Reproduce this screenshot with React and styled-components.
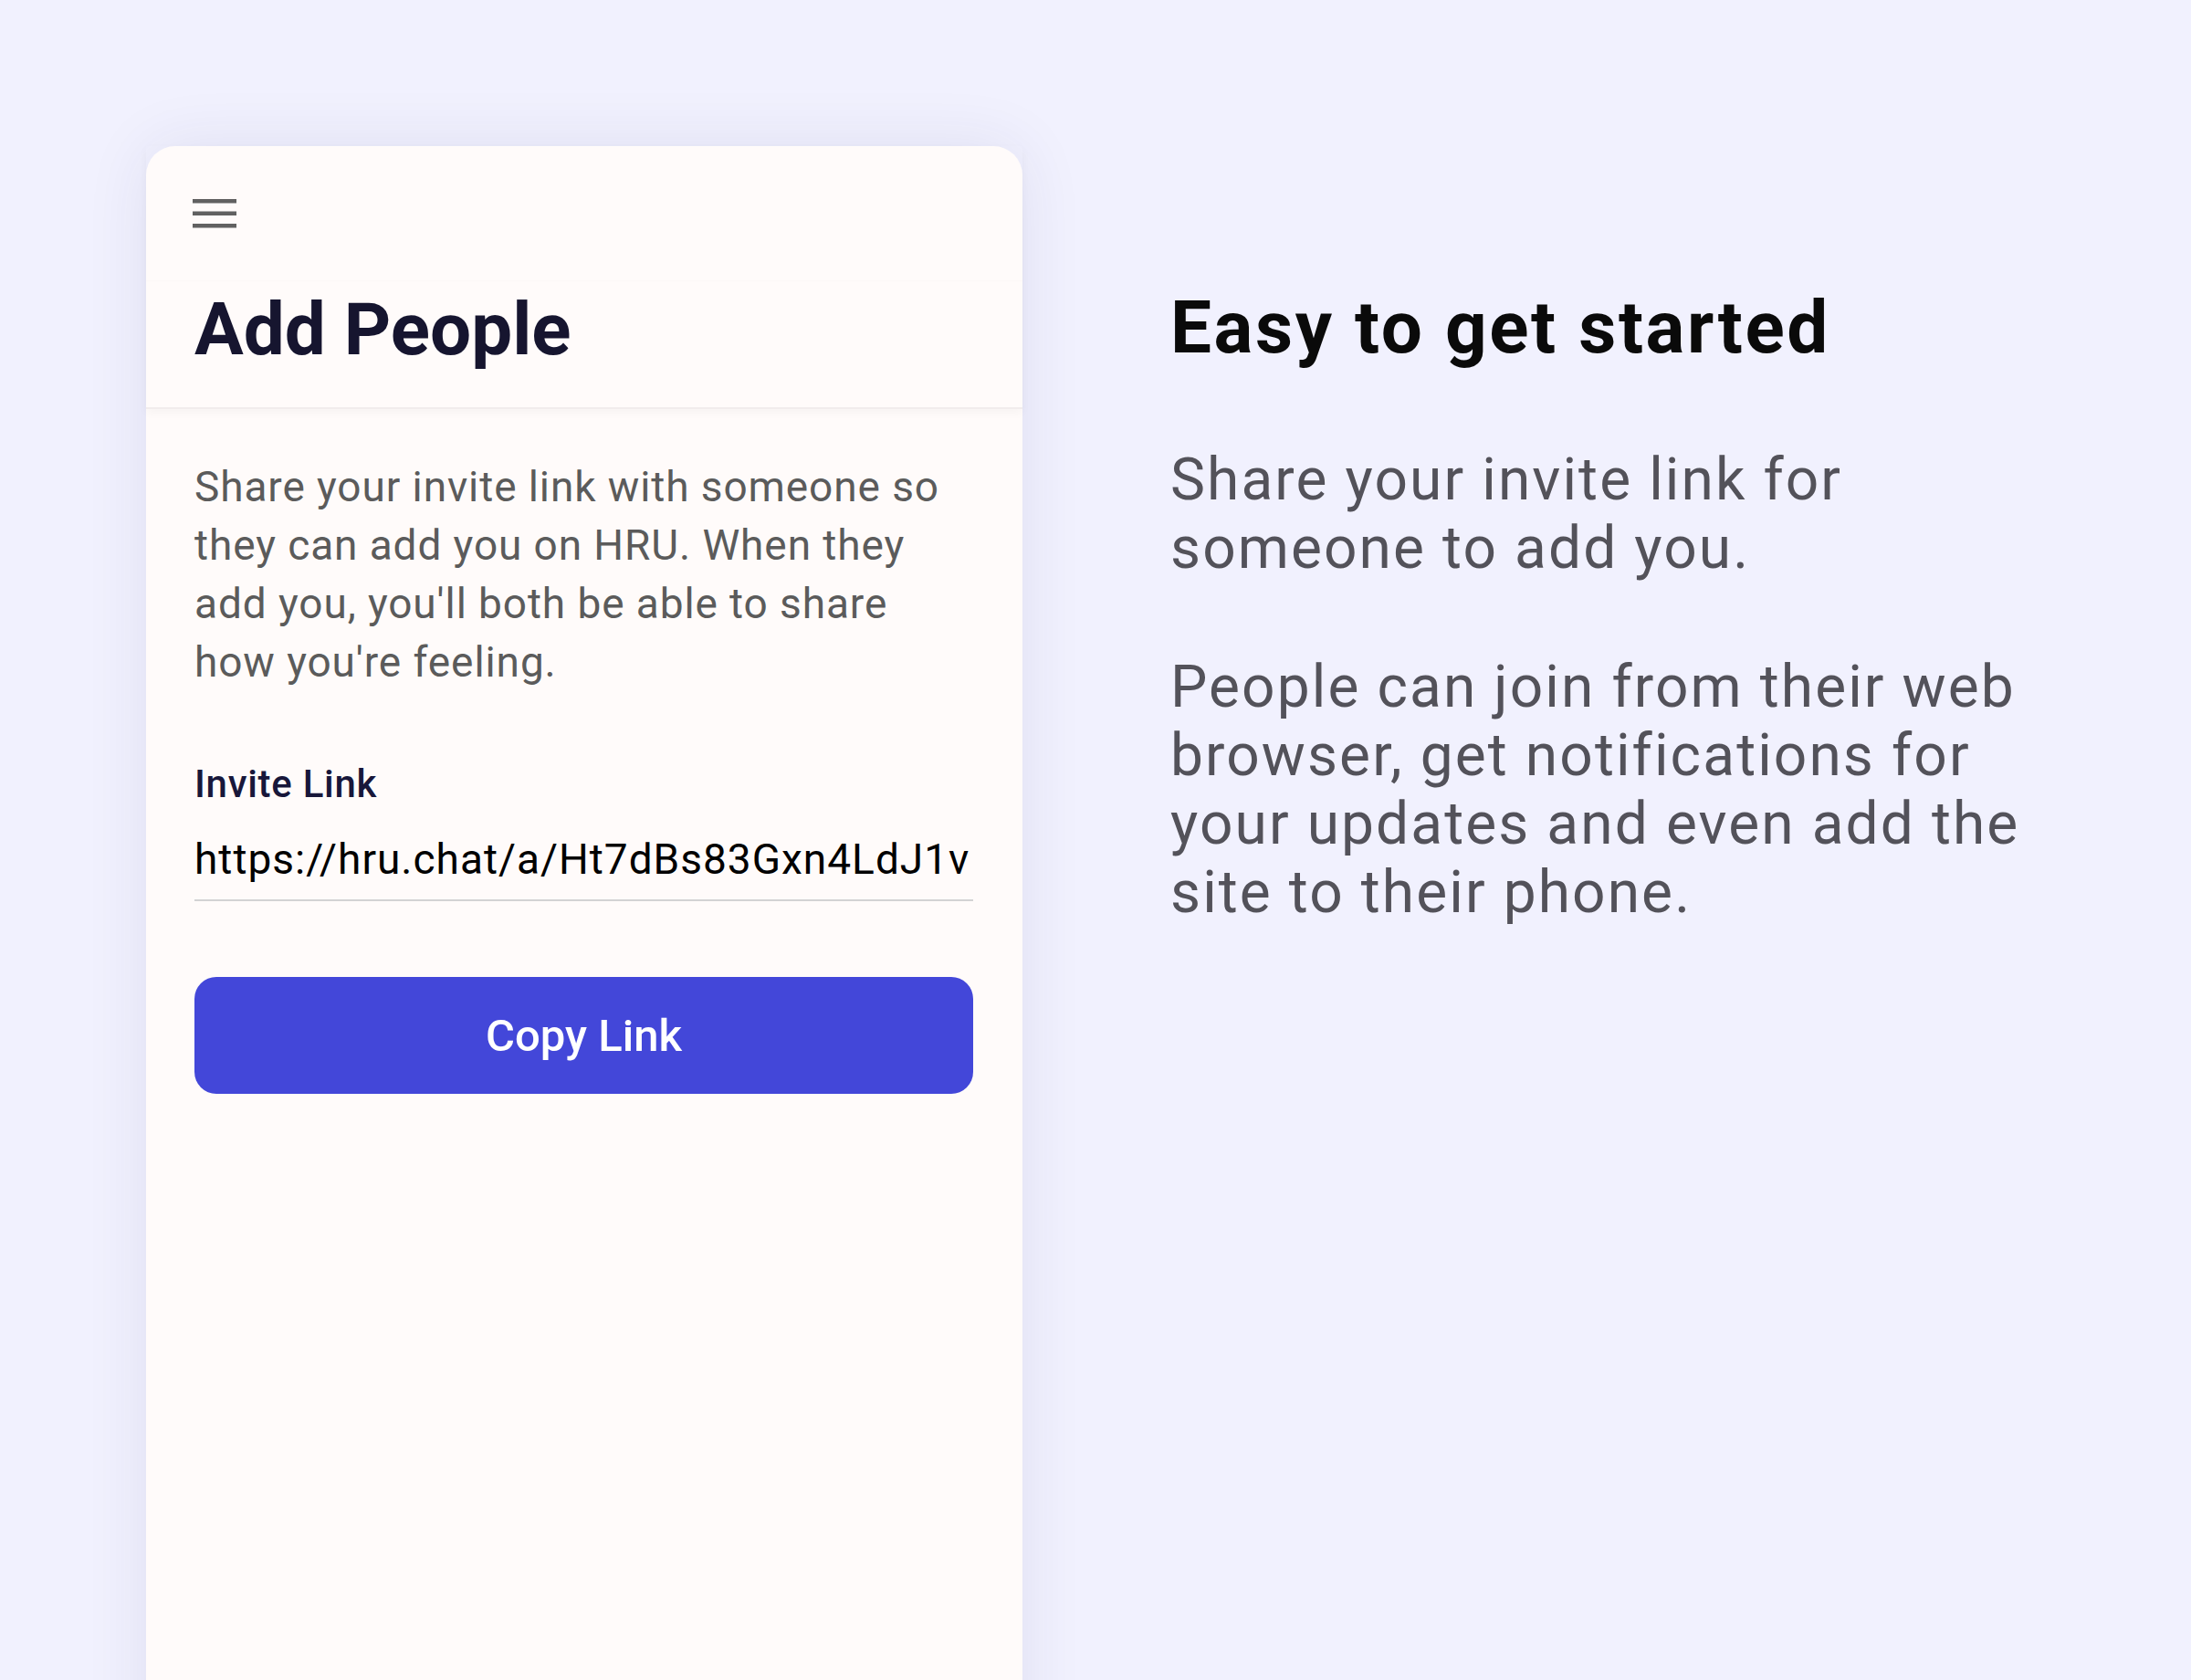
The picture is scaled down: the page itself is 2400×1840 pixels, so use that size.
import React from 'react';
import styled, {createGlobalStyle} from 'styled-components';

const Accent = '#4347d9';

const GlobalStyle = createGlobalStyle`
  html, body {
    margin: 0;
    padding: 0;
    background: #f1f1fe;
    font-family: Roboto, "Liberation Sans", sans-serif;
  }
`;

const Page = styled.div`
  display: flex;
  align-items: flex-start;
  height: 1840px;
  overflow: hidden;
  padding: 160px 0 0 160px;
  box-sizing: border-box;
  background: #f1f1fe;
`;

const Card = styled.div`
  flex: none;
  width: 960px;
  height: 1760px;
  display: flex;
  flex-direction: column;
  background: #fffbfa;
  border-radius: 32px 32px 0 0;
  box-shadow: 0 0 70px rgba(40, 40, 110, 0.09);
`;

const Header = styled.div`
  display: flex;
  flex-direction: column;
  border-bottom: 2px solid #f1ecec;
  box-shadow: 0 4px 10px rgba(0, 0, 0, 0.035);
`;

const Toolbar = styled.div`
  display: flex;
  align-items: center;
  height: 147px;
  padding-left: 51px;
  border-bottom: 1px solid rgba(0, 0, 0, 0.012);
`;

const MenuButton = styled.button`
  display: flex;
  padding: 0;
  border: none;
  background: transparent;
  cursor: pointer;
`;

const TitleBar = styled.div`
  height: 138px;
  padding: 5px 0 0 53px;
  box-sizing: border-box;
`;

const Title = styled.h1`
  margin: 0;
  font-size: 80px;
  line-height: 96px;
  font-weight: 700;
  color: #16152f;
`;

const Content = styled.div`
  display: flex;
  flex-direction: column;
  padding: 53px 54px 0 53px;
`;

const Intro = styled.p`
  margin: 0;
  font-size: 46px;
  line-height: 64px;
  letter-spacing: 0.9px;
  color: #5b5b5b;
`;

const FieldLabel = styled.label`
  margin-top: 78px;
  font-size: 42px;
  line-height: 48px;
  font-weight: 500;
  letter-spacing: 0.7px;
  color: #18173a;
`;

const LinkField = styled.div`
  margin-top: 30px;
  padding-bottom: 16px;
  border-bottom: 2px solid #d3d3d3;
  font-size: 46px;
  line-height: 56px;
  letter-spacing: 1px;
  color: #000;
  white-space: nowrap;
  overflow: hidden;
`;

const CopyButton = styled.button`
  margin-top: 83px;
  height: 128px;
  border: none;
  border-radius: 24px;
  background: ${Accent};
  color: #fff;
  font-family: Roboto, "Liberation Sans", sans-serif;
  font-size: 49px;
  font-weight: 500;
  cursor: pointer;
`;

const Pitch = styled.div`
  margin: 151px 0 0 162px;
  width: 950px;
`;

const PitchTitle = styled.h2`
  margin: 0;
  font-size: 80px;
  line-height: 96px;
  font-weight: 700;
  letter-spacing: 2.6px;
  color: #0a0a0a;
`;

const PitchText = styled.p`
  margin: ${(props) => props.gap || 0}px 0 0;
  font-size: 64px;
  line-height: 75px;
  letter-spacing: 2.1px;
  color: #53525a;
`;

function MenuIcon() {
  return (
    <svg width="48" height="32" viewBox="0 0 48 32" fill="#616161">
      <rect x="0" y="0" width="48" height="4.5" />
      <rect x="0" y="13.5" width="48" height="4.5" />
      <rect x="0" y="27" width="48" height="4.5" />
    </svg>
  );
}

export default function App() {
  return (
    <>
      <GlobalStyle />
      <Page>
        <Card>
          <Header>
            <Toolbar>
              <MenuButton aria-label="Menu">
                <MenuIcon />
              </MenuButton>
            </Toolbar>
            <TitleBar>
              <Title>Add People</Title>
            </TitleBar>
          </Header>
          <Content>
            <Intro>
              Share your invite link with someone so they can add you on HRU.
              When they add you, you'll both be able to share how you're
              feeling.
            </Intro>
            <FieldLabel>Invite Link</FieldLabel>
            <LinkField>https://hru.chat/a/Ht7dBs83Gxn4LdJ1v</LinkField>
            <CopyButton>Copy Link</CopyButton>
          </Content>
        </Card>
        <Pitch>
          <PitchTitle>Easy to get started</PitchTitle>
          <PitchText gap={81}>
            Share your invite link for someone to add you.
          </PitchText>
          <PitchText gap={77}>
            People can join from their web browser, get notifications for your
            updates and even add the site to their phone.
          </PitchText>
        </Pitch>
      </Page>
    </>
  );
}
